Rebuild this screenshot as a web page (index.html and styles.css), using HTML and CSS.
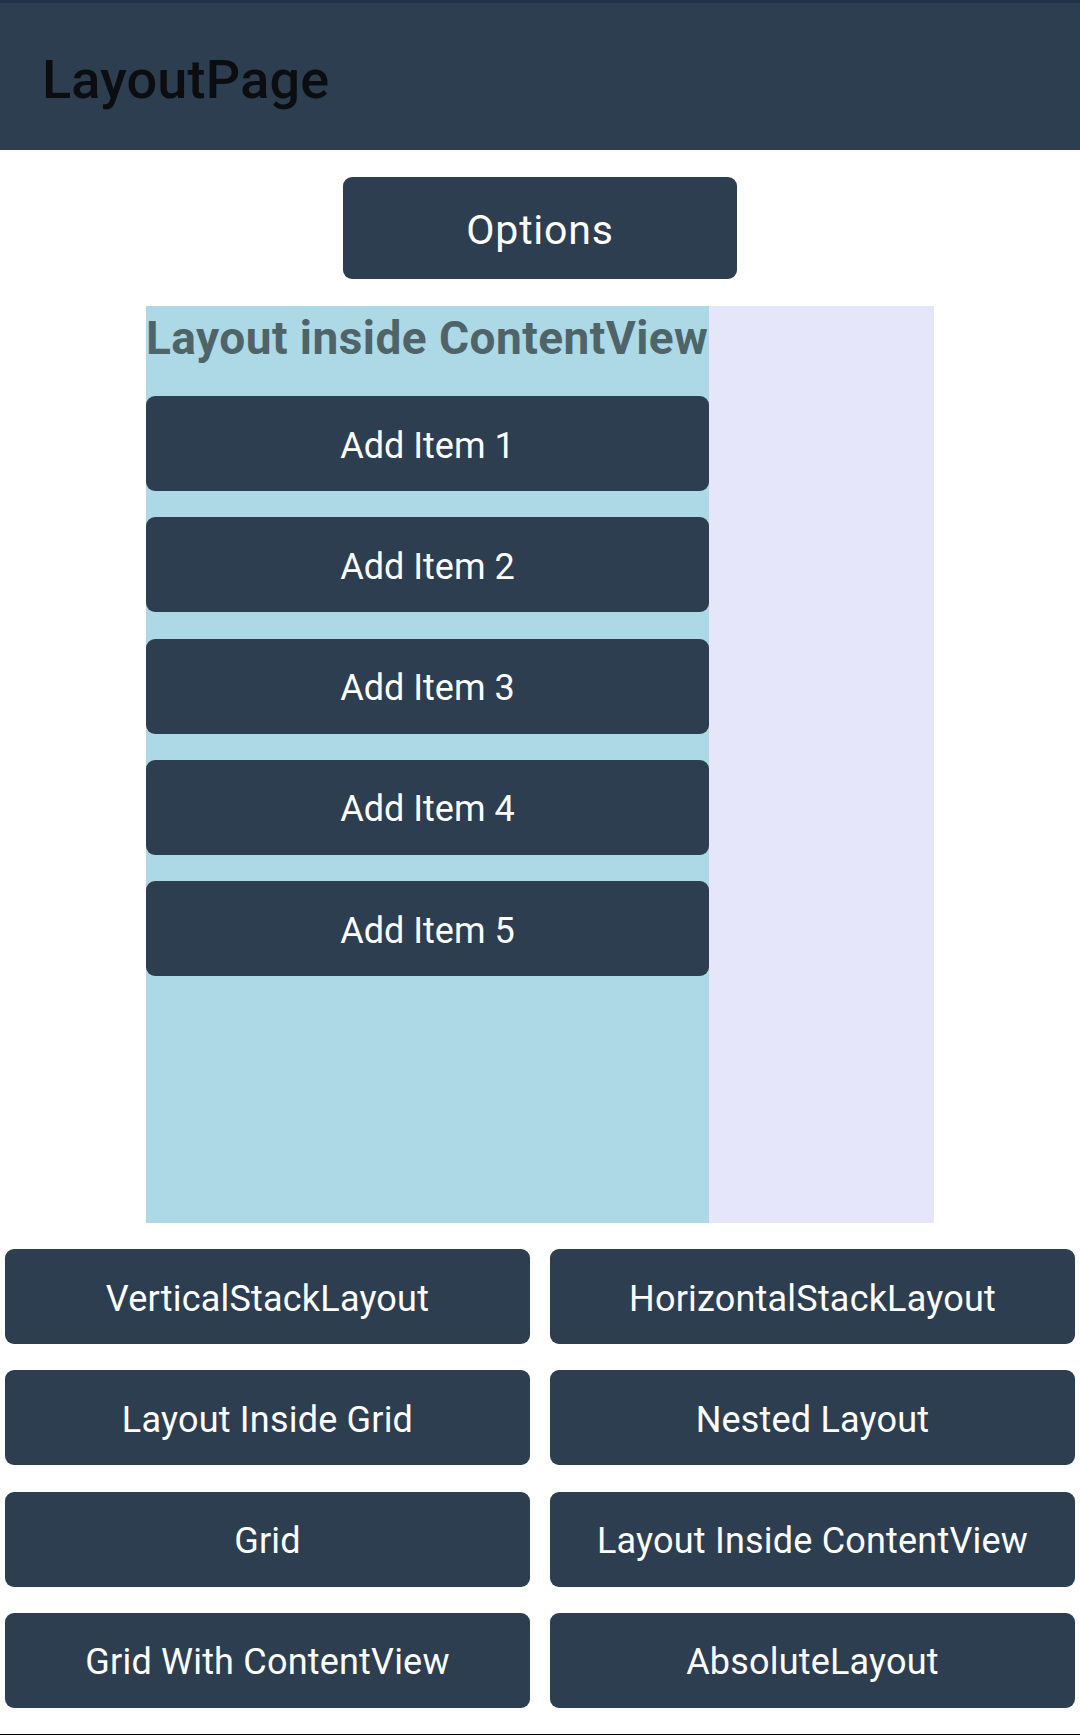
FILE: index.html
```html
<!DOCTYPE html>
<html>
<head>
<meta charset="utf-8">
<link rel="stylesheet" href="styles.css">
</head>
<body>
<div class="page">
  <header class="toolbar">
    <h1 class="toolbar-title">LayoutPage</h1>
  </header>
  <main class="main">
    <button class="btn btn-options">Options</button>
    <section class="content-view">
      <div class="stack">
        <h2 class="stack-title">Layout inside ContentView</h2>
        <div class="stack-items">
          <button class="btn btn-item">Add Item 1</button>
          <button class="btn btn-item">Add Item 2</button>
          <button class="btn btn-item">Add Item 3</button>
          <button class="btn btn-item">Add Item 4</button>
          <button class="btn btn-item">Add Item 5</button>
        </div>
      </div>
      <div class="side"></div>
    </section>
    <nav class="nav-grid">
      <button class="btn btn-nav">VerticalStackLayout</button>
      <button class="btn btn-nav">HorizontalStackLayout</button>
      <button class="btn btn-nav">Layout Inside Grid</button>
      <button class="btn btn-nav">Nested Layout</button>
      <button class="btn btn-nav">Grid</button>
      <button class="btn btn-nav">Layout Inside ContentView</button>
      <button class="btn btn-nav">Grid With ContentView</button>
      <button class="btn btn-nav">AbsoluteLayout</button>
    </nav>
  </main>
  <div class="bottom-edge"></div>
</div>
</body>
</html>
```
FILE: styles.css
```css
* { box-sizing: border-box; }
html, body {
  margin: 0;
  padding: 0;
  background: #ffffff;
  font-family: Roboto, "Noto Sans", "Liberation Sans", sans-serif;
}
.page {
  width: 1080px;
  height: 1735px;
  overflow: hidden;
  display: flex;
  flex-direction: column;
}
.toolbar {
  height: 150px;
  flex: none;
  background: #2d3e50;
  border-top: 3px solid #1f3349;
  display: flex;
  align-items: center;
  padding: 6px 0 0 42px;
}
.toolbar-title {
  margin: 0;
  font-size: 54px;
  font-weight: 500;
  color: #0b0d10;
  line-height: normal;
  letter-spacing: 0.2px;
}
.main {
  display: flex;
  flex-direction: column;
  align-items: center;
  padding-top: 27px;
}
.btn {
  border: none;
  margin: 0;
  padding: 4px 0 0 0;
  background: #2d3e50;
  color: #ffffff;
  font-family: Roboto, "Noto Sans", "Liberation Sans", sans-serif;
  font-weight: 400;
  border-radius: 9px;
  display: flex;
  align-items: center;
  justify-content: center;
  line-height: normal;
}
.btn-options {
  width: 394px;
  height: 102px;
  font-size: 41px;
  letter-spacing: 0.8px;
}
.content-view {
  margin-top: 27px;
  width: 788px;
  height: 917px;
  display: flex;
}
.stack {
  width: 563px;
  background: #add8e6;
  display: flex;
  flex-direction: column;
  padding-top: 5px;
}
.stack-title {
  margin: 0;
  font-size: 46px;
  font-weight: 700;
  line-height: 54px;
  color: #4e6469;
  white-space: nowrap;
  letter-spacing: 0.45px;
}
.stack-items {
  margin-top: 31px;
  display: flex;
  flex-direction: column;
  gap: 26.3px;
}
.btn-item {
  width: 100%;
  height: 95px;
  font-size: 36px;
}
.side {
  flex: 1;
  background: #e6e6fa;
}
.nav-grid {
  margin-top: 26px;
  width: 100%;
  padding: 0 5px;
  display: grid;
  grid-template-columns: 1fr 1fr;
  column-gap: 20px;
  row-gap: 26.3px;
}
.btn-nav {
  height: 95px;
  font-size: 36px;
  letter-spacing: 0.2px;
}
.bottom-edge {
  margin-top: auto;
  height: 1px;
  flex: none;
  background: #000000;
}
```
